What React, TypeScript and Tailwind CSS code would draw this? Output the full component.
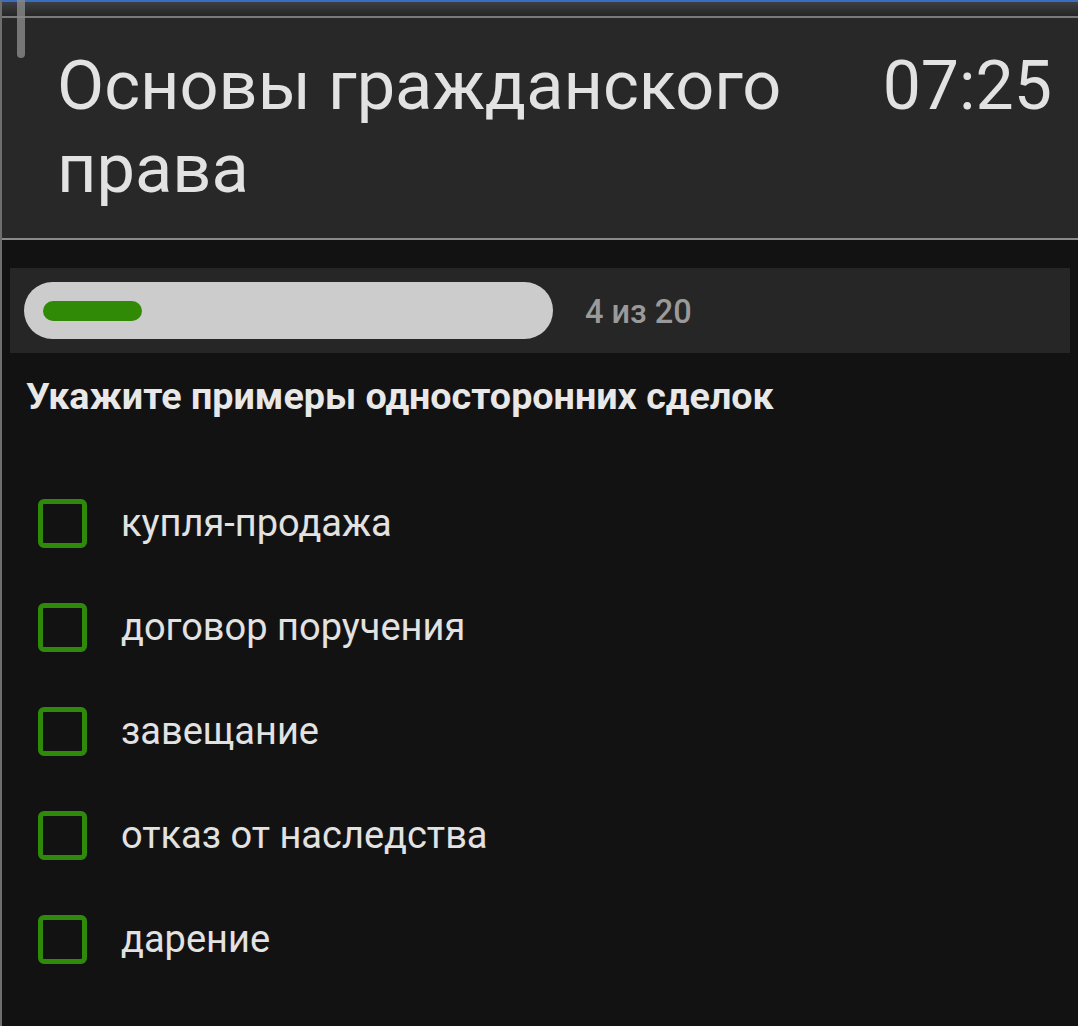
import React from "react";

const options = [
  "купля-продажа",
  "договор поручения",
  "завещание",
  "отказ от наследства",
  "дарение",
];

export default function App() {
  return (
    <div
      className="relative w-[1078px] h-[1026px] overflow-hidden bg-[#121212] border-l-2 border-[#6e6e6e]"
      style={{ fontFamily: "Roboto, 'Noto Sans', sans-serif" }}
    >
      <div className="h-[2px] bg-[#3a6cc0]" />
      <div className="h-[14px] bg-gradient-to-b from-[#3c3f44] to-[#262626]" />
      <div className="h-[2px] bg-[#7a7a7a]" />
      <header className="flex justify-between bg-[#282828] border-b-2 border-[#8a8a8a] pl-[55px] pr-[26px] pt-[26px] pb-[28px]">
        <h1 className="text-[68.5px] leading-[83px] text-[#e2e2e2] font-normal w-[760px]">
          Основы гражданского права
        </h1>
        <div className="text-[68px] leading-[84px] text-[#e2e2e2]">07:25</div>
      </header>
      <main className="px-[8px] pt-[28px]">
        <div className="flex items-center bg-[#262626] h-[85px] pl-[14px]">
          <div className="w-[529px] h-[57px] rounded-full bg-[#cccccc] flex items-center pl-[19px]">
            <div className="w-[99px] h-[20px] rounded-full bg-[#318a06]" />
          </div>
          <div className="ml-[32px] mt-[4px] text-[32.5px] font-medium text-[#9a9a9a]">4 из 20</div>
        </div>
        <h2 className="mt-[19px] ml-[16px] text-[37.7px] font-bold text-[#e8e8e8] leading-[48px]">
          Укажите примеры односторонних сделок
        </h2>
        <ul className="mt-[79px] flex flex-col gap-[56px] ml-[28px]">
          {options.map((o) => (
            <li key={o} className="flex items-center h-[48px]">
              <span className="w-[49px] h-[49px] rounded-[6px] border-[5px] border-[#2f8a0c] shrink-0" />
              <span className="ml-[34px] text-[38px] text-[#e2e2e2]">{o}</span>
            </li>
          ))}
        </ul>
      </main>
      <div className="absolute left-[15px] top-0 w-[8px] h-[58px] rounded-b-full bg-[#8a8a8a]/80" />
    </div>
  );
}
